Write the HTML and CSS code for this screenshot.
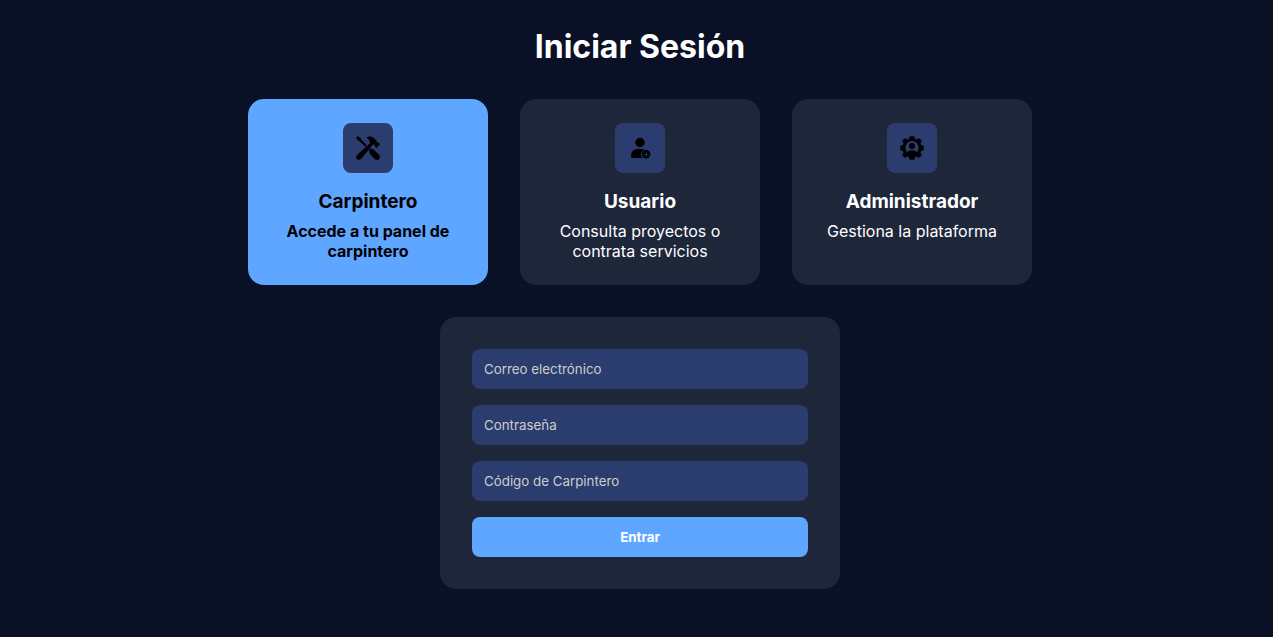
FILE: index.html
```html
<!DOCTYPE html>
<html lang="es">
<head>
<meta charset="utf-8">
<meta name="viewport" content="width=device-width, initial-scale=1">
<title>Iniciar Sesión</title>
<link rel="stylesheet" href="styles.css">
</head>
<body>
<main class="login">
  <h1 class="title">Iniciar Sesión</h1>
  <div class="roles">
    <button type="button" class="role role-active" aria-pressed="true">
      <span class="role-icon">
        <svg viewBox="0 0 24 24" width="24" height="24" aria-hidden="true">
          <path d="M.2 1.600 1.600.2 4.500 1.800 5.200 3.600 10.800 9.100 9.300 10.700 3.600 5.200 1.800 4.500Z"/>
          <path d="M10.300 1.500C13-.3 16.300.3 18.200 2.200L20.600 4.700Q20.300 6.200 21.300 6.800L22.300 6.500 24 8.200 20.500 11.900 18.700 10.100 18.900 9Q17.900 8.100 16.700 8.700L5.700 22.300C3.900 24.700.3 24 0 21.400Q-.2 19.600 2 18L14 7.200 13.600 4.700Q12.700 2.700 10.300 1.500Z"/>
          <path d="M12.800 14.200 14.500 12.500 17.600 13.500 22.900 18.700C25.600 22 22 25.600 18.700 22.900L13.800 18Z"/>
        </svg>
      </span>
      <span class="role-name">Carpintero</span>
      <span class="role-text">Accede a tu panel de carpintero</span>
    </button>
    <button type="button" class="role" aria-pressed="false">
      <span class="role-icon">
        <svg viewBox="0 0 24 24" width="24" height="24" aria-hidden="true">
          <circle cx="12" cy="6.500" r="4.700"/>
          <path d="M9.500 13H14.500Q15.900 13 17.100 13.500A5 5 0 0 0 14.600 22H4.700Q3 22 3 20.200C3 16 5.500 13 9.500 13Z"/>
          <path fill-rule="evenodd" d="M18.200 14.100a4.200 4.200 0 1 1 0 8.400 4.200 4.200 0 0 1 0-8.400ZM17.800 15.800v2.100h-2.100v.8h2.100v2.100h.8v-2.100h2.100v-.8h-2.100v-2.100Z"/>
        </svg>
      </span>
      <span class="role-name">Usuario</span>
      <span class="role-text">Consulta proyectos o contrata servicios</span>
    </button>
    <button type="button" class="role" aria-pressed="false">
      <span class="role-icon">
        <svg viewBox="0 0 24 24" width="24" height="24" aria-hidden="true">
          <path fill-rule="evenodd" d="M10.500.3h3q1 0 1.200 1l.3 1.500 1.800.8 1.500-1q.8-.6 1.500.1l1.500 1.500q.7.700.1 1.500l-1 1.500.8 1.800 1.500.3q1 .2 1 1.200v3q0 1-1 1.200l-1.500.3-.8 1.800 1 1.500q.6.800-.1 1.500l-1.500 1.500q-.7.700-1.500.1l-1.500-1-1.800.8-.3 1.500q-.2 1-1.200 1h-3q-1 0-1.200-1L9 21.200l-1.800-.8-1.500 1q-.8.600-1.500-.1l-1.500-1.500q-.7-.7-.1-1.500l1-1.500L2.800 15l-1.500-.3q-1-.2-1-1.200v-3q0-1 1-1.200L2.800 9l.8-1.800-1-1.500q-.6-.8.1-1.500l1.500-1.500q.7-.7 1.500-.1l1.500 1L9 2.800l.3-1.500q.2-1 1.200-1ZM7.100 16.300Q8.500 14.300 12 14.300T16.900 16.300A6.700 6.700 0 1 0 7.100 16.300Z"/>
          <circle cx="12" cy="10" r="3"/>
        </svg>
      </span>
      <span class="role-name">Administrador</span>
      <span class="role-text">Gestiona la plataforma</span>
    </button>
  </div>
  <form class="form">
    <input class="field" type="email" placeholder="Correo electrónico" aria-label="Correo electrónico">
    <input class="field" type="password" placeholder="Contraseña" aria-label="Contraseña">
    <input class="field" type="text" placeholder="Código de Carpintero" aria-label="Código de Carpintero">
    <button class="submit" type="submit">Entrar</button>
  </form>
</main>
</body>
</html>
```
FILE: styles.css
```css
* {
  box-sizing: border-box;
}

body {
  margin: 0;
  background: #0a1126;
  color: #fff;
  font-family: Inter, "Liberation Sans", sans-serif;
}

.login {
  display: flex;
  flex-direction: column;
  align-items: center;
  gap: 32px;
  padding: 27px 16px 48px 23px;
}

.title {
  margin: 0;
  font-size: 32px;
  line-height: 40px;
  font-weight: 700;
}

.roles {
  display: flex;
  flex-wrap: wrap;
  justify-content: center;
  gap: 32px;
}

.role {
  display: flex;
  flex-direction: column;
  align-items: center;
  width: 240px;
  padding: 24px;
  border: 0;
  border-radius: 16px;
  background: #1e263a;
  color: #fff;
  font: inherit;
  text-align: center;
  cursor: pointer;
}

.role-active {
  background: #5ea6ff;
  color: #000;
}

.role-icon {
  display: grid;
  place-items: center;
  width: 50px;
  height: 50px;
  margin-bottom: 16px;
  border-radius: 8px;
  background: #2b3c6e;
  color: #000;
}

.role-icon svg {
  fill: currentColor;
  overflow: visible;
}

.role-name {
  margin-bottom: 6px;
  font-size: 19px;
  line-height: 26px;
  font-weight: 700;
}

.role-text {
  font-size: 16px;
  line-height: 20px;
}

.role-active .role-text {
  font-weight: 700;
}

.form {
  display: flex;
  flex-direction: column;
  gap: 16px;
  width: 100%;
  max-width: 400px;
  padding: 32px;
  border-radius: 16px;
  background: #1e263a;
}

.field,
.submit {
  width: 100%;
  padding: 12px;
  border: 0;
  border-radius: 8px;
  font-family: inherit;
  line-height: 16px;
  color: #fff;
}

.field {
  background: #2b3c6e;
}

.field::placeholder {
  color: #ccc;
  opacity: 1;
}

.submit {
  background: #5ea6ff;
  font-weight: 700;
  cursor: pointer;
}
```
